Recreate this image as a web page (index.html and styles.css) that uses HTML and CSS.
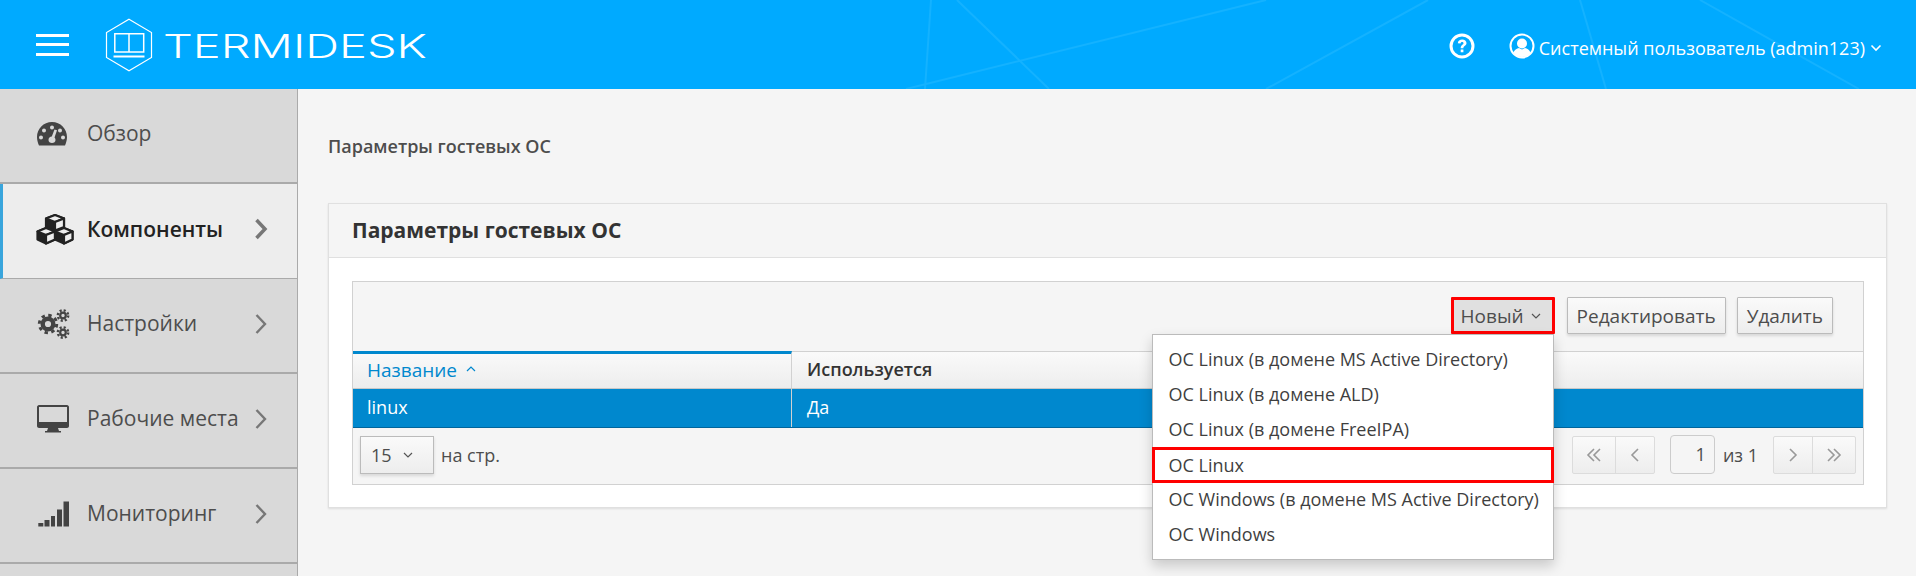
FILE: index.html
```html
<!DOCTYPE html>
<html lang="ru">
<head>
<meta charset="utf-8">
<title>Termidesk</title>
<link rel="stylesheet" href="styles.css">
</head>
<body>
<header class="topbar">
  <svg class="topbar-lines" width="1916" height="89" viewBox="0 0 1916 89" aria-hidden="true">
    <path d="M931 0L925 89M957 0L1049 89M1266 0L906 89M1428 0L1266 89M1580 0L1606 89M1700 0L1859 89" fill="none" stroke="#14b2ff" stroke-width="2"/>
  </svg>
  <button class="burger" aria-label="Меню"><span></span><span></span><span></span></button>
  <div class="logo">
    <svg class="logo-mark" width="50" height="54" viewBox="0 0 50 54" aria-hidden="true">
      <path d="M25 1.300L47.500 14.500V39.500L25 52.700L2.500 39.500V14.500Z" fill="none" stroke="#fff" stroke-width="1.200"/>
      <path d="M10.800 15.800H39.700V34H10.800ZM25 15.800V34" fill="none" stroke="#fff" stroke-width="1.500"/>
      <path d="M9.500 38.500H40.500" fill="none" stroke="#fff" stroke-width="2"/>
    </svg>
    <svg class="wordmark" width="268" height="44" viewBox="0 0 268 44">
      <text x="0" y="34.500" textLength="264" lengthAdjust="spacingAndGlyphs">TERMIDESK</text>
    </svg>
  </div>
  <div class="top-right">
    <svg class="help" width="26" height="26" viewBox="0 0 26 26" aria-hidden="true">
      <circle cx="13" cy="13" r="11" fill="none" stroke="#fff" stroke-width="3"/>
      <path d="M8.800 10.300C9 7.700 10.800 6.500 13.200 6.500C15.700 6.500 17.500 8 17.500 10.100C17.500 12.900 14.400 12.800 14.400 15.200H11.700C11.700 11.700 14.500 11.800 14.500 10.200C14.500 9.300 13.900 8.900 13.100 8.900C12.200 8.900 11.600 9.500 11.500 10.600ZM11.700 16.500H14.400V19.200H11.700Z" fill="#fff"/>
    </svg>
    <svg class="avatar" width="26" height="26" viewBox="0 0 26 26" aria-hidden="true">
      <circle cx="13" cy="13" r="11.500" fill="none" stroke="#fff" stroke-width="2"/>
      <circle cx="13" cy="10.500" r="5" fill="#fff"/>
      <path d="M4.500 20C5 17 8 15.500 10 15L13 16.500L16 15C18 15.500 21 17 21.500 20C19.500 22.700 16.500 24 13 24C9.500 24 6.500 22.700 4.500 20Z" fill="#fff"/>
    </svg>
    <span class="user-name">Системный пользователь (admin123)</span>
    <svg class="user-caret" width="12" height="8" viewBox="0 0 12 8" aria-hidden="true"><path d="M1.500 1.500L6 6L10.500 1.500" fill="none" stroke="#fff" stroke-width="1.600"/></svg>
  </div>
</header>
<div class="layout">
  <nav class="sidebar">
    <a class="nav-item">
      <svg class="nav-icon" width="32" height="26" viewBox="0 0 32 26" aria-hidden="true">
        <path fill-rule="evenodd" d="M16 1C7.500 1 1 7.800 1 16C1 19 1.800 21.800 3 24.500H29C30.200 21.800 31 19 31 16C31 7.800 24.500 1 16 1ZM16 4.500A2 2 0 1 1 16 8.500A2 2 0 1 1 16 4.500ZM8 7.500A2 2 0 1 1 8 11.500A2 2 0 1 1 8 7.500ZM24 7.500A2 2 0 1 1 24 11.500A2 2 0 1 1 24 7.500ZM5 14.500A2 2 0 1 1 5 18.500A2 2 0 1 1 5 14.500ZM27 14.500A2 2 0 1 1 27 18.500A2 2 0 1 1 27 14.500ZM18.500 8.500L21 9.300L18.500 16.500C19.300 17.300 19.500 18.200 19.500 19C19.500 20.900 18 22 16 22C14 22 12.500 20.700 12.500 19C12.500 17 14 15.800 15.800 15.600Z" fill="#444"/>
      </svg>
      <span class="nav-label">Обзор</span>
    </a>
    <a class="nav-item active">
      <svg class="nav-icon" width="38" height="32" viewBox="0 0 38 32" aria-hidden="true">
        <g stroke="#222" stroke-width="2.200" stroke-linejoin="round">
          <path d="M19 2L28 5.500V14L19 17.500L10 14V5.500Z" fill="#222"/>
          <path d="M10 5.500L19 2L28 5.500L19 9Z" fill="#eee"/>
          <path d="M19 9L28 5.500V14L19 17.500Z" fill="#eee"/>
          <path d="M10 15L19 18.500V26.500L10 30.500L1.500 26.500V18.500Z" fill="#222"/>
          <path d="M1.500 18.500L10 15L19 18.500L10 22Z" fill="#eee"/>
          <path d="M10 22L19 18.500V26.500L10 30.500Z" fill="#eee"/>
          <path d="M28 15L36.500 18.500V26.500L28 30.500L19 26.500V18.500Z" fill="#222"/>
          <path d="M19 18.500L28 15L36.500 18.500L28 22Z" fill="#eee"/>
          <path d="M28 22L36.500 18.500V26.500L28 30.500Z" fill="#eee"/>
        </g>
      </svg>
      <span class="nav-label">Компоненты</span>
      <svg class="nav-chevron" width="14" height="22" viewBox="0 0 14 22" aria-hidden="true"><path d="M2.500 2L11 11L2.500 20" fill="none" stroke="#777" stroke-width="3.500"/></svg>
    </a>
    <a class="nav-item">
      <svg class="nav-icon" width="34" height="30" viewBox="0 0 34 30" aria-hidden="true">
        <g fill="none" stroke="#444">
          <circle cx="12" cy="15" r="5.300" stroke-width="4.400"/>
          <circle cx="12" cy="15" r="8.700" stroke-width="3" stroke-dasharray="3.400 3.430"/>
          <circle cx="27" cy="6.500" r="2.800" stroke-width="2.200"/>
          <circle cx="27" cy="6.500" r="5.200" stroke-width="2.400" stroke-dasharray="2.100 1.990"/>
          <circle cx="27" cy="23.500" r="2.800" stroke-width="2.200"/>
          <circle cx="27" cy="23.500" r="5.200" stroke-width="2.400" stroke-dasharray="2.100 1.990"/>
        </g>
      </svg>
      <span class="nav-label">Настройки</span>
      <svg class="nav-chevron" width="14" height="22" viewBox="0 0 14 22" aria-hidden="true"><path d="M2.500 2L11 11L2.500 20" fill="none" stroke="#777" stroke-width="2.400"/></svg>
    </a>
    <a class="nav-item">
      <svg class="nav-icon" width="34" height="30" viewBox="0 0 34 30" aria-hidden="true">
        <path fill-rule="evenodd" d="M3 1H31C32 1 33 2 33 3V22C33 23 32 24 31 24H22L23 27H25V28.500H9V27H11L12 24H3C2 24 1 23 1 22V3C1 2 2 1 3 1ZM3 3V18H31V3Z" fill="#444"/>
      </svg>
      <span class="nav-label">Рабочие места</span>
      <svg class="nav-chevron" width="14" height="22" viewBox="0 0 14 22" aria-hidden="true"><path d="M2.500 2L11 11L2.500 20" fill="none" stroke="#777" stroke-width="2.400"/></svg>
    </a>
    <a class="nav-item">
      <svg class="nav-icon" width="34" height="28" viewBox="0 0 34 28" aria-hidden="true">
        <path d="M2.300 23H7.300V26.500H2.300ZM8.500 20H13.500V26.500H8.500ZM15 16H19V26.500H15ZM21 9.500H26V26.500H21ZM27.500 1.500H33V26.500H27.500Z" fill="#444"/>
      </svg>
      <span class="nav-label">Мониторинг</span>
      <svg class="nav-chevron" width="14" height="22" viewBox="0 0 14 22" aria-hidden="true"><path d="M2.500 2L11 11L2.500 20" fill="none" stroke="#777" stroke-width="2.400"/></svg>
    </a>
  </nav>
  <main class="content">
    <div class="breadcrumb">Параметры гостевых ОС</div>
    <section class="panel">
      <h2 class="panel-title">Параметры гостевых ОС</h2>
      <div class="panel-body">
        <div class="grid">
          <div class="toolbar">
            <div class="new-wrap">
              <button class="btn btn-new">Новый
                <svg width="12" height="8" viewBox="0 0 12 8" aria-hidden="true"><path d="M2 2L6 6L10 2" fill="none" stroke="#555" stroke-width="1.200"/></svg>
              </button>
              <ul class="menu">
                <li>ОС Linux (в домене MS Active Directory)</li>
                <li>ОС Linux (в домене ALD)</li>
                <li>ОС Linux (в домене FreeIPA)</li>
                <li class="menu-mark">ОС Linux</li>
                <li>ОС Windows (в домене MS Active Directory)</li>
                <li>ОС Windows</li>
              </ul>
            </div>
            <button class="btn">Редактировать</button>
            <button class="btn">Удалить</button>
          </div>
          <div class="thead">
            <div class="th th-sorted">Название
              <svg width="12" height="8" viewBox="0 0 12 8" aria-hidden="true"><path d="M2 6L6 2L10 6" fill="none" stroke="#0088ce" stroke-width="1.200"/></svg>
            </div>
            <div class="th">Используется</div>
          </div>
          <div class="trow">
            <div class="td td-first">linux</div>
            <div class="td">Да</div>
          </div>
          <div class="gfoot">
            <button class="select">15
              <svg width="12" height="8" viewBox="0 0 12 8" aria-hidden="true"><path d="M2 2L6 6L10 2" fill="none" stroke="#555" stroke-width="1.200"/></svg>
            </button>
            <span class="per">на стр.</span>
            <div class="pager">
              <div class="pg-group">
                <span class="pg pg-wide"><svg width="16" height="14" viewBox="0 0 16 14" aria-hidden="true"><path d="M8 1L2 7L8 13M14 1L8 7L14 13" fill="none" stroke="#999" stroke-width="1.600"/></svg></span>
                <span class="pg"><svg width="10" height="14" viewBox="0 0 10 14" aria-hidden="true"><path d="M8 1L2 7L8 13" fill="none" stroke="#999" stroke-width="1.600"/></svg></span>
              </div>
              <span class="pg-input">1</span>
              <span class="pg-of">из 1</span>
              <div class="pg-group">
                <span class="pg"><svg width="10" height="14" viewBox="0 0 10 14" aria-hidden="true"><path d="M2 1L8 7L2 13" fill="none" stroke="#999" stroke-width="1.600"/></svg></span>
                <span class="pg pg-last"><svg width="16" height="14" viewBox="0 0 16 14" aria-hidden="true"><path d="M2 1L8 7L2 13M8 1L14 7L8 13" fill="none" stroke="#999" stroke-width="1.600"/></svg></span>
              </div>
            </div>
          </div>
        </div>
      </div>
    </section>
  </main>
</div>
</body>
</html>
```
FILE: styles.css
```css
* { box-sizing: border-box; }
html, body { margin: 0; height: 100%; }
body {
  width: 1916px;
  height: 576px;
  overflow: hidden;
  display: flex;
  flex-direction: column;
  background: #f5f5f5;
  font-family: "Open Sans", "Noto Sans", sans-serif;
  font-size: 18px;
  color: #444;
}
button { font-family: inherit; }

.topbar {
  position: relative;
  flex: 0 0 89px;
  display: flex;
  align-items: center;
  background: #00aaff;
  color: #fff;
}
.topbar-lines { position: absolute; left: 0; top: 0; }
.burger {
  position: relative;
  display: flex;
  flex-direction: column;
  justify-content: space-between;
  width: 33px;
  height: 22px;
  margin-left: 36px;
  padding: 0;
  border: 0;
  background: none;
}
.burger span { display: block; height: 3px; background: #fff; }
.logo { position: relative; display: flex; align-items: center; margin-left: 35px; }
.logo-mark { margin-top: 1px; }
.wordmark { margin-left: 9px; }
.wordmark text { font-family: "Inter", sans-serif; font-size: 33px; font-weight: 300; fill: #fff; }
.top-right { position: relative; display: flex; align-items: center; margin-left: auto; margin-right: 34px; }
.help { margin-right: 34px; margin-top: 2px; }
.avatar { margin-right: 4px; margin-top: 2px; }
.user-name { font-size: 18px; margin-right: 5px; margin-top: 7px; white-space: nowrap; }
.user-caret { margin-top: 6px; }

.layout { flex: 1; display: flex; min-height: 0; }
.sidebar {
  flex: 0 0 298px;
  background: #d9d9d9;
  border-right: 1px solid #aaa;
  display: flex;
  flex-direction: column;
}
.nav-item {
  flex: 0 0 95px;
  display: flex;
  align-items: center;
  position: relative;
  padding-left: 87px;
  padding-right: 29px;
  border-bottom: 2px solid #aaa;
  font-size: 21px;
  color: #4d4d4d;
}
.nav-item.active { background: #ededed; color: #222; font-weight: 600; border-left: 3px solid #39a5dc; padding-left: 84px; border-bottom-width: 1px; }
.nav-icon { position: absolute; left: 36px; top: calc(50% - 2px); transform: translateY(-50%); }
.active .nav-icon { left: 33px; }
.nav-chevron { margin-left: auto; margin-top: -4px; flex: none; }
.nav-label { margin-top: -5px; white-space: nowrap; }

.content { flex: 1; padding: 44px 29px 0 30px; min-width: 0; }
.breadcrumb { font-size: 18px; font-weight: 600; color: #4d4d4d; line-height: 26px; margin-bottom: 44px; }
.panel {
  background: #fff;
  border: 1px solid #e0e0e0;
  box-shadow: 0 1px 2px rgba(0,0,0,.1);
}
.panel-title {
  margin: 0;
  height: 54px;
  padding-left: 23px;
  font-size: 21px;
  line-height: 52px;
  font-weight: 700;
  color: #333;
  background: #f5f5f5;
  border-bottom: 1px solid #e0e0e0;
}
.panel-body { padding: 23px 22px 22px 23px; }
.grid { border: 1px solid #d1d1d1; background: #f5f5f5; }
.toolbar {
  height: 69px;
  display: flex;
  align-items: flex-start;
  justify-content: flex-end;
  gap: 11px;
  padding: 15px 30px 0 0;
}
.new-wrap { position: relative; margin-right: 1px; }
.btn {
  height: 37px;
  padding: 0 9px;
  font-size: 19px;
  color: #4d4d4d;
  border: 1px solid #bbb;
  border-radius: 1px;
  background: linear-gradient(#fafafa, #ededed);
  box-shadow: 0 2px 3px rgba(0,0,0,.12);
  white-space: nowrap;
}
.btn-new {
  width: 104px;
  border: 3px solid #f00;
  background: #e0e0e0;
  box-shadow: none;
  padding: 0 0 0 7px;
  display: flex;
  align-items: center;
  gap: 6px;
}
.menu {
  position: absolute;
  right: 1px;
  top: 37px;
  width: 402px;
  height: 226px;
  margin: 0;
  padding: 7px 0;
  list-style: none;
  background: #fff;
  border: 1px solid #bbb;
  box-shadow: 0 6px 12px rgba(0,0,0,.18);
  font-size: 18px;
  z-index: 5;
}
.menu li { height: 35px; line-height: 35px; padding-left: 16px; color: #3f3f3f; white-space: nowrap; }
.menu .menu-mark { margin: 0 -1px -1px; height: 36px; line-height: 30px; border: 3px solid #f00; padding-left: 14px; }

.thead {
  display: flex;
  height: 38px;
  border-top: 1px solid #d1d1d1;
  border-bottom: 1px solid #c8c8c8;
  background: linear-gradient(#fafafa, #ededed);
}
.th {
  padding-left: 15px;
  font-size: 18px;
  font-weight: 600;
  line-height: 35px;
  color: #333;
}
.th-sorted {
  flex: 0 0 439px;
  margin-top: -1px;
  padding-left: 14px;
  padding-bottom: 2px;
  border-top: 3px solid #0088ce;
  border-right: 1px solid #d1d1d1;
  color: #0088ce;
  font-weight: 400;
  font-size: 19px;
  display: flex;
  align-items: center;
  gap: 8px;
  line-height: 34px;
}
.th-sorted svg { margin-top: -3px; }
.trow { display: flex; height: 39px; background: #0088ce; border-bottom: 1px solid #00659c; color: #fff; font-size: 18px; line-height: 37px; }
.td { padding-left: 15px; }
.td-first { flex: 0 0 439px; padding-left: 14px; border-right: 1px solid #d1d1d1; }
.gfoot { height: 56px; display: flex; align-items: center; padding: 0 7px 3px 7px; }
.select {
  width: 74px;
  height: 38px;
  display: flex;
  align-items: center;
  gap: 10px;
  padding: 0 0 0 10px;
  font-size: 18px;
  font-weight: 400;
  color: #4d4d4d;
  border: 1px solid #bbb;
  background: linear-gradient(#fafafa, #ededed);
  box-shadow: 0 2px 3px rgba(0,0,0,.12);
}
.per { margin-left: 7px; color: #4d4d4d; }
.pager { margin-left: auto; display: flex; align-items: center; }
.pg-group { display: flex; height: 38px; border: 1px solid #dcdcdc; border-radius: 2px; background: linear-gradient(#fafafa, #ededed); }
.pg { width: 38px; display: flex; align-items: center; justify-content: center; }
.pg-wide { width: 43px; border-right: 1px solid #dcdcdc; }
.pg-last { width: 43px; border-left: 1px solid #dcdcdc; }
.pg-input { width: 45px; height: 39px; margin-left: 15px; border: 1px solid #ccc; border-radius: 4px; background: #f5f5f5; text-align: right; padding-right: 8px; line-height: 37px; color: #4d4d4d; }
.pg-of { margin: 0 15px 0 8px; color: #4d4d4d; white-space: nowrap; }
```
